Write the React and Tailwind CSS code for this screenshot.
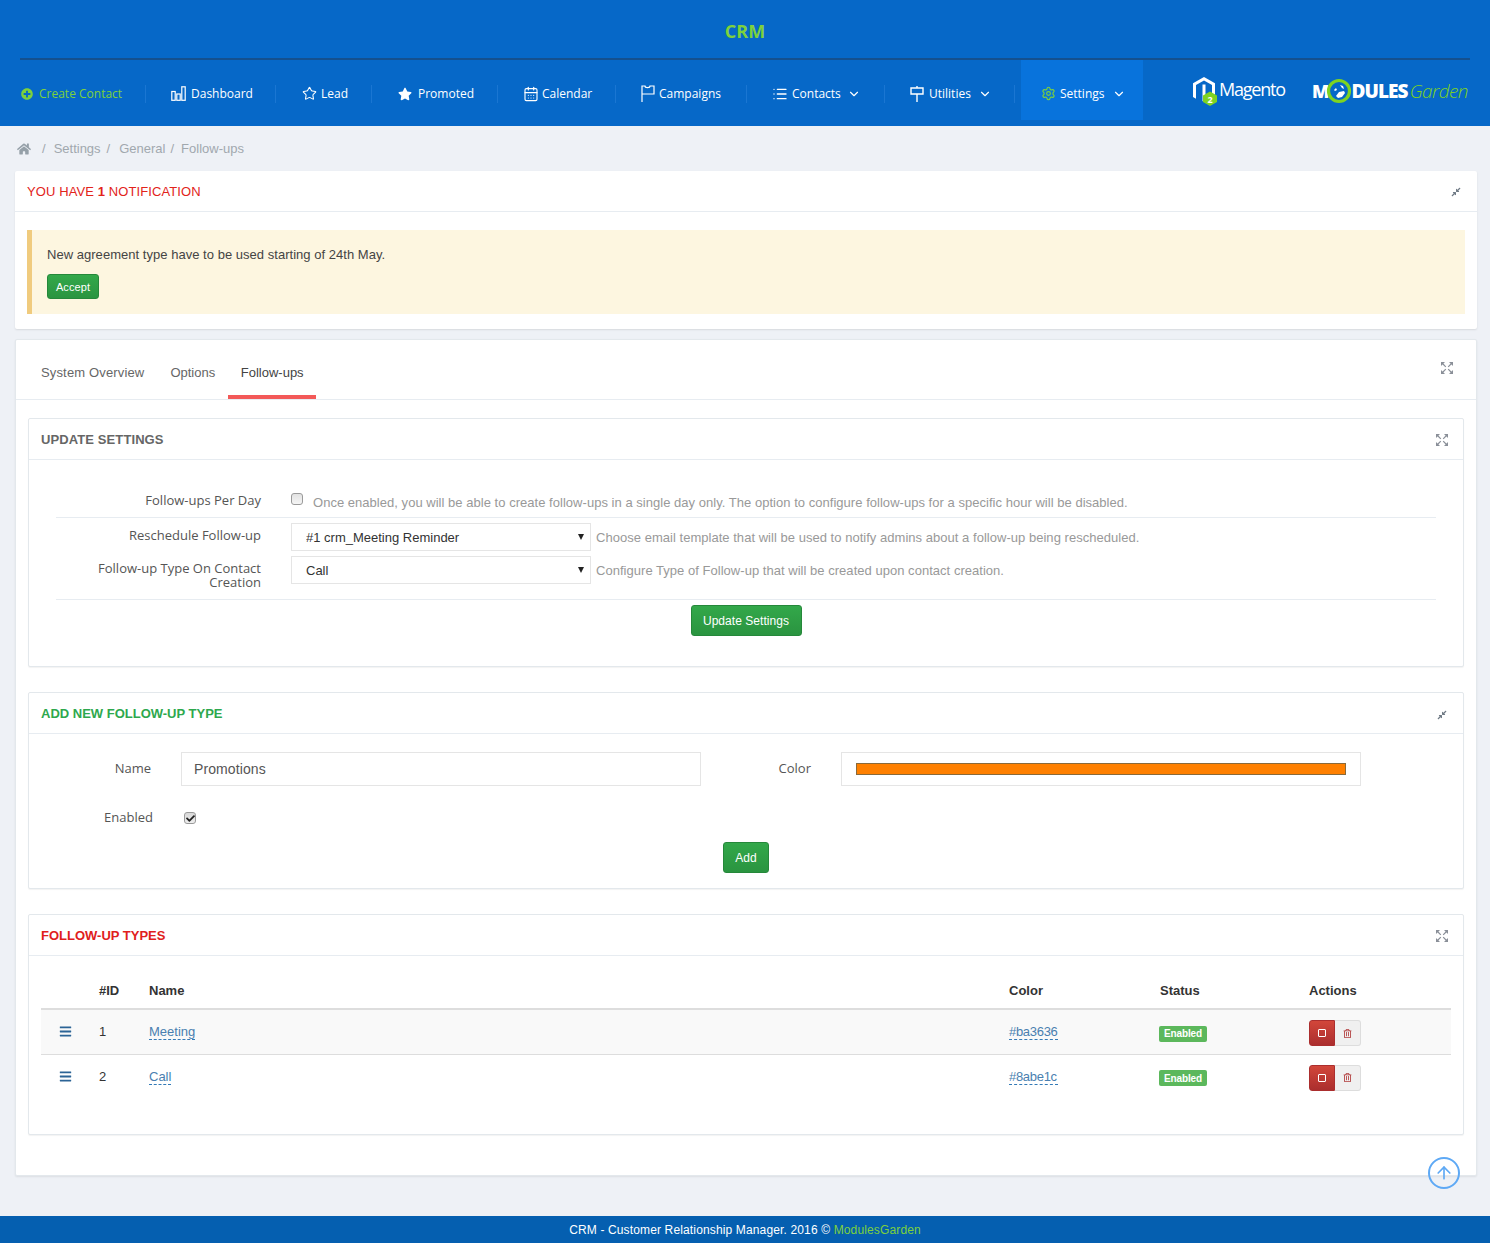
import React from "react";
import { Star, CalendarDays, List, Settings, ChevronDown, ArrowUp } from "lucide-react";
import { FaPlusCircle, FaStar, FaHome, FaCompressAlt, FaBars, FaCheck, FaRegTrashAlt } from "react-icons/fa";

const OS = "font-['Open_Sans',sans-serif]";

function BarsIcon() {
  return (
    <svg width="15" height="15" viewBox="0 0 15 15" fill="none" stroke="white" strokeWidth="1.2">
      <rect x="0.8" y="5.5" width="3.4" height="8.8" />
      <rect x="5.8" y="8" width="3.4" height="6.3" />
      <rect x="10.8" y="0.8" width="3.4" height="13.5" />
    </svg>
  );
}
function FlagIcon() {
  return (
    <svg width="14" height="17" viewBox="0 0 14 17" fill="none" stroke="white" strokeWidth="1.2">
      <path d="M1 17V1h3c0 2.2 5 2.2 5 0h4v8H1" />
    </svg>
  );
}
function SignIcon() {
  return (
    <svg width="14" height="16" viewBox="0 0 14 16" fill="none" stroke="white" strokeWidth="1.4">
      <path d="M7 0v2M1 2h12v6H1zM7 8v8" />
    </svg>
  );
}
function ExpandArrows() {
  return (
    <svg width="12" height="12" viewBox="0 0 12 12" className="block">
      <g fill="#8a8f98">
        <path d="M0 0h4L0 4z" />
        <path d="M12 0H8l4 4z" />
        <path d="M0 12h4L0 8z" />
        <path d="M12 12H8l4-4z" />
      </g>
      <g stroke="#8a8f98" strokeWidth="1.2" fill="none">
        <path d="M1.5 1.5 4.8 4.8M10.5 1.5 7.2 4.8M1.5 10.5l3.3-3.3M10.5 10.5 7.2 7.2" />
      </g>
    </svg>
  );
}

const navItems = [
  { label: "Dashboard", icon: <BarsIcon />, gap: "gap-[5px]", cls: "w-[130px] pl-[25px]" },
  { label: "Lead", icon: <Star size={15} strokeWidth={1.7} color="white" />, gap: "gap-[4px]", cls: "w-[96px] pl-[26px]" },
  { label: "Promoted", icon: <FaStar size={14} color="white" />, gap: "gap-[6px]", cls: "w-[126px] pl-[26px]" },
  { label: "Calendar", icon: <CalendarDays size={16} strokeWidth={1.7} color="white" />, gap: "gap-[3px]", cls: "w-[118px] pl-[25px]" },
  { label: "Campaigns", icon: <FlagIcon />, gap: "gap-[4px]", cls: "w-[131px] pl-[25px]" },
  { label: "Contacts", icon: <List size={16} strokeWidth={2} color="white" />, gap: "gap-[4px]", cls: "w-[138px] pl-[25px]", caret: true },
  { label: "Utilities", icon: <SignIcon />, gap: "gap-[5px]", cls: "w-[130px] pl-[25px]", caret: true },
];

function MagentoLogo() {
  return (
    <div className="flex items-center">
      <svg width="26" height="30" viewBox="0 0 26 30" fill="none" className="-mr-[2px]">
        <path d="M12 1 23 7.3V21l-3 1.8V9L12 4.5 4 9v13.8L1 21V7.3Z" fill="white" />
        <path d="M10.5 8.5h3V25l-1.5.9-1.5-.9Z" fill="white" />
        <path d="M18 15.5 25 19.5v6.5L18 30 11 26v-6.5Z" fill="#7ed321" />
        <text x="18" y="26.5" fontSize="9" fontWeight="700" fill="white" textAnchor="middle" fontFamily="Open Sans">2</text>
      </svg>
      <span className={`${OS} text-white text-[18px] tracking-[-1.2px] ml-[3px] -mt-[3px]`}>Magento</span>
    </div>
  );
}

function ModulesLogo() {
  return (
    <div className="flex items-center ml-[27px] h-[30px]">
      <span className={`${OS} text-white text-[18px] font-extrabold leading-none`}>M</span>
      <svg width="26" height="26" viewBox="0 0 26 26" className="-ml-[3px]" fill="none">
        <circle cx="13" cy="13" r="10.5" stroke="#7ed321" strokeWidth="3.2" />
        <path d="M8 12l2-2 1 2-2 1zM14 7l3 1 1 3-2-1zM10 18l3-4 5-1 1 2-3 4-4 1z" fill="white" />
      </svg>
      <span className={`${OS} text-white text-[19px] font-extrabold tracking-[-0.9px] leading-none -ml-[1px]`}>DULES</span>
      <span className={`${OS} text-[#7ed321] text-[19px] font-light italic tracking-[-0.6px] leading-none ml-[2px]`}>Garden</span>
    </div>
  );
}

function Header() {
  return (
    <header className={`bg-[#0668c8] h-[126px] ${OS}`}>
      <div className="h-[58px] flex items-center justify-center pt-[5px]">
        <span className="text-[#7dd13c] text-[18px] font-bold">CRM</span>
      </div>
      <div className="mx-[20px] h-[2px] bg-[#14508f]" />
      <nav className="flex h-[60px] items-center text-[12px] text-white">
        <div className="w-[146px] pl-[21px] h-[18px] mt-[7px] flex items-center gap-[6px] border-r border-[#1a76d2] text-[#7dd13c]">
          <FaPlusCircle size={12} />
          <span>Create Contact</span>
        </div>
        {navItems.map((n) => (
          <div key={n.label} className={`${n.cls} h-[18px] mt-[7px] flex items-center ${n.gap} border-r border-[#1a76d2]`}>
            {n.icon}
            <span>{n.label}</span>
            {n.caret && <ChevronDown size={14} strokeWidth={2} className="ml-[2px]" />}
          </div>
        ))}
        <div className="ml-[6px] w-[122px] h-[60px] pl-[20px] pt-[7px] flex items-center gap-[4px] bg-[#0873dc]">
          <Settings size={15} strokeWidth={1.8} color="#7dd13c" />
          <span>Settings</span>
          <ChevronDown size={14} strokeWidth={2} className="ml-[3px]" />
        </div>
        <div className="ml-[49px] mt-[2px] flex items-center">
          <MagentoLogo />
          <ModulesLogo />
        </div>
      </nav>
    </header>
  );
}

function Panel({ title, titleClass, icon, className = "", children }) {
  return (
    <section className={`bg-white border border-[#e3e8ec] rounded-[2px] shadow-[0_1px_1px_rgba(0,0,0,0.05)] ${className}`}>
      <div className="h-[41px] pt-[2px] px-[12px] flex items-center justify-between border-b border-[#e7ecf1]">
        <h2 className={`text-[13px] font-bold ${titleClass}`}>{title}</h2>
        {icon}
      </div>
      {children}
    </section>
  );
}

const ExpandIcon = <span className="mr-[3px]"><ExpandArrows /></span>;
const PinIcon = <span className="mr-[4px] mt-[1px]"><FaCompressAlt size={10} color="#6f7a85" /></span>;

function GreenButton({ children, className = "" }) {
  return (
    <button className={`bg-gradient-to-b from-[#33a84a] to-[#2a9440] border border-[#25883a] rounded-[3px] text-white ${className}`}>
      {children}
    </button>
  );
}

function SelectBox({ value }) {
  return (
    <div className="relative w-[300px] h-[28px] shrink-0">
      <select defaultValue={value} className="appearance-none w-full h-full border border-[#e5e5e5] bg-white pl-[14px] pt-[2px] text-[13px] text-[#333]">
        <option>{value}</option>
      </select>
      <span className="absolute right-[7px] top-[11px] w-0 h-0 border-x-[3px] border-x-transparent border-t-[6px] border-t-[#222] pointer-events-none" />
    </div>
  );
}

function UpdateSettings() {
  const labelCls = `${OS} w-[205px] text-right text-[13px] text-[#555] leading-[14px] shrink-0`;
  const help = "text-[13px] text-[#999] tracking-[0.03px]";
  return (
    <Panel title="UPDATE SETTINGS" titleClass="text-[#666] tracking-[0.1px]" icon={ExpandIcon}>
      <div className="mx-[27px] pt-[33px] h-[206px]">
        <div className="h-[25px] flex border-b border-[#e7ecf1]">
          <div className={labelCls}>Follow-ups Per Day</div>
          <span className="ml-[30px] w-[12px] h-[12px] rounded-[3px] border border-[#9a9a9a] bg-gradient-to-b from-[#e2e2e2] to-[#f5f5f5] shrink-0" />
          <span className={`${help} ml-[10px] mt-[2px] leading-[16px]`}>
            Once enabled, you will be able to create follow-ups in a single day only. The option to configure follow-ups for a specific hour will be disabled.
          </span>
        </div>
        <div className="flex items-center mt-[5px] h-[28px]">
          <div className={`${labelCls} -mt-[4px]`}>Reschedule Follow-up</div>
          <div className="ml-[30px]"><SelectBox value="#1 crm_Meeting Reminder" /></div>
          <span className={`${help} ml-[5px] mt-[2px]`}>Choose email template that will be used to notify admins about a follow-up being rescheduled.</span>
        </div>
        <div className="flex mt-[5px] h-[44px] border-b border-[#e7ecf1]">
          <div className={`${labelCls} pt-[5px]`}>Follow-up Type On Contact<br />Creation</div>
          <div className="ml-[30px]"><SelectBox value="Call" /></div>
          <span className={`${help} ml-[5px] mt-[7px] leading-[16px]`}>Configure Type of Follow-up that will be created upon contact creation.</span>
        </div>
        <div className="flex justify-center mt-[5px]">
          <GreenButton className="w-[111px] h-[31px] text-[12px] tracking-[0.05px]">Update Settings</GreenButton>
        </div>
      </div>
    </Panel>
  );
}

function AddType() {
  const label = `${OS} text-[13px] text-[#555]`;
  return (
    <Panel title="ADD NEW FOLLOW-UP TYPE" titleClass="text-[#2ea84d]" icon={PinIcon} className="mt-[25px]">
      <div className="h-[154px] pt-[18px]">
        <div className="flex items-center h-[34px]">
          <div className={`${label} w-[122px] text-right`}>Name</div>
          <input
            readOnly
            value="Promotions"
            className="ml-[30px] w-[520px] h-[34px] border border-[#e5e5e5] px-[12px] text-[14px] text-[#555] tracking-[0.1px]"
          />
          <div className={`${label} w-[110px] text-right`}>Color</div>
          <div className="ml-[30px] w-[520px] h-[34px] border border-[#e5e5e5] px-[14px] flex items-center">
            <div className="w-full h-[12px] bg-[#ff8000] border border-[#8a6a3a]" />
          </div>
        </div>
        <div className="flex items-center mt-[21px] h-[22px]">
          <div className={`${label} w-[124px] text-right`}>Enabled</div>
          <span className="relative ml-[31px] w-[12px] h-[12px] rounded-[3px] border border-[#9a9a9a] bg-gradient-to-b from-[#d8d8d8] to-[#eeeeee]">
            <FaCheck size={9} color="#222" className="absolute left-[1px] top-[1px]" />
          </span>
        </div>
        <div className="flex justify-center mt-[13px]">
          <GreenButton className="w-[46px] h-[31px] text-[12px]">Add</GreenButton>
        </div>
      </div>
    </Panel>
  );
}

const rows = [
  { id: 1, name: "Meeting", color: "#ba3636", cls: "bg-[#f9f9f9] border-b border-[#ddd] h-[45px] pt-[2px]" },
  { id: 2, name: "Call", color: "#8abe1c", cls: "h-[45px]" },
];
const gridCls = "grid grid-cols-[58px_50px_860px_151px_149px_1fr]";
const dashed = "text-[#4a7fb0] border-b border-dashed border-[#337ab7] leading-[15px]";

function Types() {
  return (
    <Panel title="FOLLOW-UP TYPES" titleClass="text-[#e0201c]" icon={ExpandIcon} className="mt-[25px]">
      <div className="mx-[12px] pt-[19px] h-[178px] text-[13px]">
        <div className={`${gridCls} h-[35px] items-center border-b-2 border-[#ddd] font-bold text-[#333] pb-[2px]`}>
          <span />
          <span>#ID</span>
          <span>Name</span>
          <span>Color</span>
          <span>Status</span>
          <span>Actions</span>
        </div>
        {rows.map((r) => (
          <div key={r.id} className={`${gridCls} items-center ${r.cls}`}>
            <span className="pl-[18px] -mt-[3px]"><FaBars size={13} color="#2c6496" /></span>
            <span className="text-[#333] -mt-[2px]">{r.id}</span>
            <span className="-mt-[2px]"><a className={dashed}>{r.name}</a></span>
            <span className="-mt-[2px]"><a className={`${dashed} inline-block w-[49px] tracking-[-0.3px]`}>{r.color}</a></span>
            <span>
              <b className="-ml-[1px] inline-flex items-center justify-center w-[48px] h-[16px] bg-[#5cb85c] rounded-[2px] text-white text-[10px] tracking-[-0.1px]">Enabled</b>
            </span>
            <span className="flex h-[26px]">
              <span className="w-[26px] flex items-center justify-center bg-gradient-to-b from-[#d2463a] to-[#ab2e2e] border border-[#ab2e2e] rounded-l-[3px]">
                <span className="w-[8px] h-[8px] border border-white rounded-[1px]" />
              </span>
              <span className="w-[26px] flex items-center justify-center bg-[#f0f0f0] border border-[#ddd] border-l-0 rounded-r-[3px]">
                <FaRegTrashAlt size={9} color="#b03a3a" />
              </span>
            </span>
          </div>
        ))}
      </div>
    </Panel>
  );
}

export default function App() {
  return (
    <div className="relative min-h-[1243px] bg-[#eef1f6] font-['Liberation_Sans',sans-serif] flex flex-col">
      <Header />
      <div className="h-[45px] pl-[17px] flex items-center text-[13px] text-[#a1a8ae]">
        <FaHome size={14} className="text-[#95a0a8]" />
        <span className="ml-[11px]">/</span>
        <span className="ml-[8px]">Settings</span>
        <span className="ml-[6px]">/</span>
        <span className="ml-[9px]">General</span>
        <span className="ml-[5px]">/</span>
        <span className="ml-[7px]">Follow-ups</span>
      </div>

      <div className="mx-[15px] w-[1462px]">
        <section className="bg-white rounded-[2px] shadow-[0_1px_2px_rgba(0,0,0,0.1)] h-[158px]">
          <div className="h-[41px] pt-[2px] pl-[12px] pr-[16px] flex items-center justify-between border-b border-[#e7ecf1]">
            <h2 className="text-[13px] text-[#e2231a] tracking-[0.1px]">
              YOU HAVE <b>1</b> NOTIFICATION
            </h2>
            <FaCompressAlt size={10} color="#6f7a85" />
          </div>
          <div className="mx-[12px] mt-[18px] h-[84px] bg-[#fdf6e0] border-l-[5px] border-[#f0cb7e] pl-[15px] pt-[17px]">
            <p className="text-[13px] leading-[16px] text-[#444] tracking-[0.03px]">New agreement type have to be used starting of 24th May.</p>
            <GreenButton className="block mt-[11px] w-[52px] h-[25px] pt-[1px] text-[11px] tracking-[0.1px]">Accept</GreenButton>
          </div>
        </section>

        <section className="mt-[10px] bg-white border border-[#e3e8ec] rounded-[2px] shadow-[0_1px_2px_rgba(0,0,0,0.08)] h-[837px]">
          <div className="h-[60px] flex items-end justify-between border-b border-[#e7ecf1] pr-[23px]">
            <div className="flex text-[13px] text-[#666] h-[60px]">
              <span className="ml-[25px] pt-[24px] tracking-[0.15px]">System Overview</span>
              <span className="ml-[26px] pt-[24px]">Options</span>
              <span className="ml-[13px] w-[88px] text-center pt-[24px] h-[60px] border-b-[4px] border-[#f35958] text-[#444]">Follow-ups</span>
            </div>
            <span className="self-start mt-[22px]"><ExpandArrows /></span>
          </div>
          <div className="mx-[12px] mt-[18px]">
            <UpdateSettings />
            <AddType />
            <Types />
          </div>
        </section>
      </div>

      <button className="absolute left-[1428px] top-[1157px] w-[32px] h-[32px] rounded-full border-2 border-[#5ea9f5] flex items-center justify-center">
        <ArrowUp size={20} strokeWidth={2} color="#5ea9f5" />
      </button>

      <footer className="mt-auto h-[27px] bg-[#055fb0] flex items-center justify-center text-[12px] text-white pt-[1px] tracking-[0.14px]">
        <span>CRM - Customer Relationship Manager. 2016 © <span className="text-[#7dd13c]">ModulesGarden</span></span>
      </footer>
    </div>
  );
}
